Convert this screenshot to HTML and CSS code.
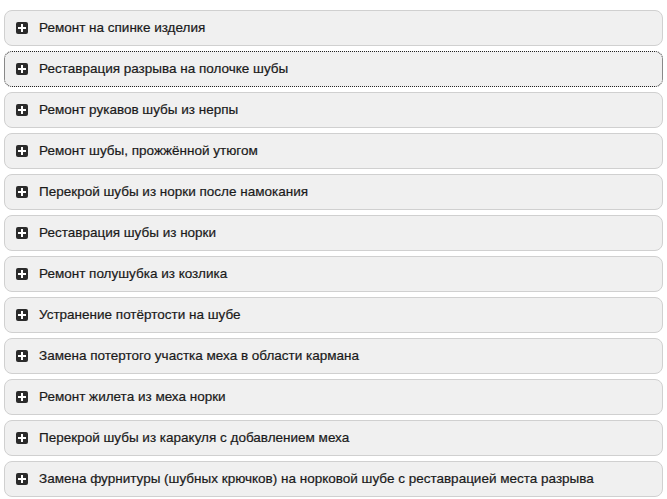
FILE: index.html
```html
<!DOCTYPE html>
<html lang="ru">
<head>
  <meta charset="UTF-8">
  <meta name="viewport" content="width=device-width, initial-scale=1.0">
  <title>Ремонт шуб</title>
  <link rel="stylesheet" href="styles.css">
</head>
<body>
  <div class="accordion">
    <div class="item"><span class="icon"></span><span class="title">Ремонт на спинке изделия</span></div>
    <div class="item focused"><span class="icon"></span><span class="title">Реставрация разрыва на полочке шубы</span></div>
    <div class="item"><span class="icon"></span><span class="title">Ремонт рукавов шубы из нерпы</span></div>
    <div class="item"><span class="icon"></span><span class="title">Ремонт шубы, прожжённой утюгом</span></div>
    <div class="item"><span class="icon"></span><span class="title">Перекрой шубы из норки после намокания</span></div>
    <div class="item"><span class="icon"></span><span class="title">Реставрация шубы из норки</span></div>
    <div class="item"><span class="icon"></span><span class="title">Ремонт полушубка из козлика</span></div>
    <div class="item"><span class="icon"></span><span class="title">Устранение потёртости на шубе</span></div>
    <div class="item"><span class="icon"></span><span class="title">Замена потертого участка меха в области кармана</span></div>
    <div class="item"><span class="icon"></span><span class="title">Ремонт жилета из меха норки</span></div>
    <div class="item"><span class="icon"></span><span class="title">Перекрой шубы из каракуля с добавлением меха</span></div>
    <div class="item"><span class="icon"></span><span class="title">Замена фурнитуры (шубных крючков) на норковой шубе с реставрацией места разрыва</span></div>
  </div>
</body>
</html>
```

FILE: styles.css
```css
body { margin: 0; padding: 0; background: #fff; font-family: "Liberation Sans", Arial, sans-serif; }
.accordion { padding: 10px 4px 0 4px; display: flex; flex-direction: column; gap: 5px; }
.item { box-sizing: border-box; height: 36px; display: flex; align-items: center; gap: 11px; padding: 0 0 1px 11px; background: #f0f0f0; border: 1px solid #d0d0d0; border-radius: 8px; font-size: 13.5px; color: #1a1a1a; -webkit-text-stroke: 0.2px #1a1a1a; }
.item.focused { border: 1px dotted #222; }
.icon { position: relative; width: 12px; height: 12px; background: #2b2b2b; border-radius: 2px; flex: none; }
.icon::before, .icon::after { content: ""; position: absolute; background: #fff; }
.icon::before { left: 2px; top: 5px; width: 8px; height: 2px; }
.icon::after { left: 5px; top: 2px; width: 2px; height: 8px; }
.title { white-space: nowrap; }
```
